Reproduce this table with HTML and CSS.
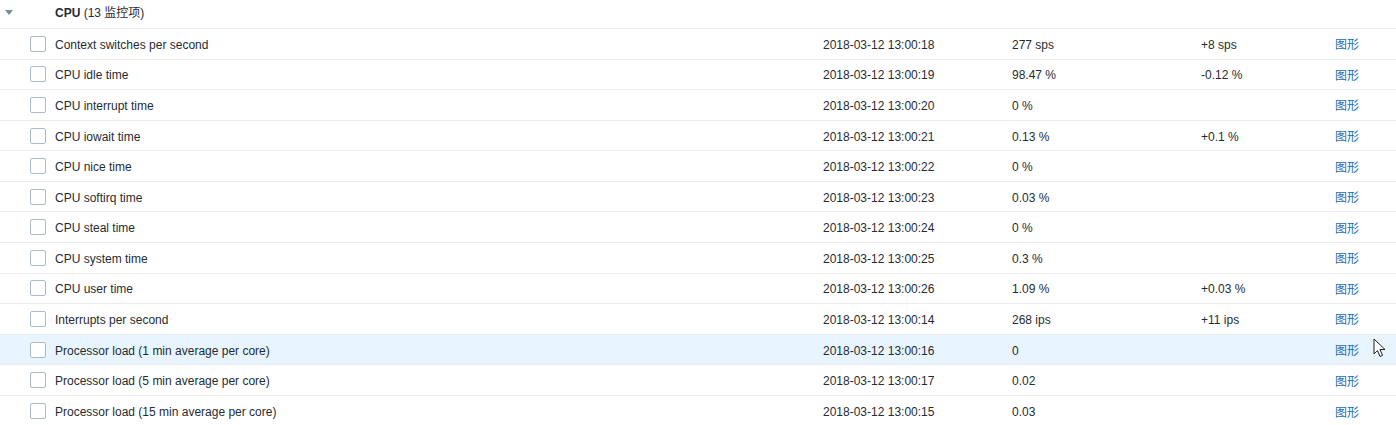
FILE: index.html
```html
<!DOCTYPE html>
<html>
<head>
<meta charset="utf-8">
<link rel="stylesheet" href="styles.css">
</head>
<body>
<div class="table">
  <div class="row head">
    <div class="toggle"><span class="arrow"></span></div>
    <div class="cell name"><b>CPU</b> (13 监控项)</div>
  </div>
  <div class="row"><div class="toggle"></div><div class="chk"><span class="box"></span></div><div class="cell name">Context switches per second</div><div class="cell date">2018-03-12 13:00:18</div><div class="cell val">277 sps</div><div class="cell chg">+8 sps</div><div class="cell lnk"><a href="#">图形</a></div></div>
  <div class="row"><div class="toggle"></div><div class="chk"><span class="box"></span></div><div class="cell name">CPU idle time</div><div class="cell date">2018-03-12 13:00:19</div><div class="cell val">98.47 %</div><div class="cell chg">-0.12 %</div><div class="cell lnk"><a href="#">图形</a></div></div>
  <div class="row"><div class="toggle"></div><div class="chk"><span class="box"></span></div><div class="cell name">CPU interrupt time</div><div class="cell date">2018-03-12 13:00:20</div><div class="cell val">0 %</div><div class="cell chg"></div><div class="cell lnk"><a href="#">图形</a></div></div>
  <div class="row"><div class="toggle"></div><div class="chk"><span class="box"></span></div><div class="cell name">CPU iowait time</div><div class="cell date">2018-03-12 13:00:21</div><div class="cell val">0.13 %</div><div class="cell chg">+0.1 %</div><div class="cell lnk"><a href="#">图形</a></div></div>
  <div class="row"><div class="toggle"></div><div class="chk"><span class="box"></span></div><div class="cell name">CPU nice time</div><div class="cell date">2018-03-12 13:00:22</div><div class="cell val">0 %</div><div class="cell chg"></div><div class="cell lnk"><a href="#">图形</a></div></div>
  <div class="row"><div class="toggle"></div><div class="chk"><span class="box"></span></div><div class="cell name">CPU softirq time</div><div class="cell date">2018-03-12 13:00:23</div><div class="cell val">0.03 %</div><div class="cell chg"></div><div class="cell lnk"><a href="#">图形</a></div></div>
  <div class="row"><div class="toggle"></div><div class="chk"><span class="box"></span></div><div class="cell name">CPU steal time</div><div class="cell date">2018-03-12 13:00:24</div><div class="cell val">0 %</div><div class="cell chg"></div><div class="cell lnk"><a href="#">图形</a></div></div>
  <div class="row"><div class="toggle"></div><div class="chk"><span class="box"></span></div><div class="cell name">CPU system time</div><div class="cell date">2018-03-12 13:00:25</div><div class="cell val">0.3 %</div><div class="cell chg"></div><div class="cell lnk"><a href="#">图形</a></div></div>
  <div class="row"><div class="toggle"></div><div class="chk"><span class="box"></span></div><div class="cell name">CPU user time</div><div class="cell date">2018-03-12 13:00:26</div><div class="cell val">1.09 %</div><div class="cell chg">+0.03 %</div><div class="cell lnk"><a href="#">图形</a></div></div>
  <div class="row"><div class="toggle"></div><div class="chk"><span class="box"></span></div><div class="cell name">Interrupts per second</div><div class="cell date">2018-03-12 13:00:14</div><div class="cell val">268 ips</div><div class="cell chg">+11 ips</div><div class="cell lnk"><a href="#">图形</a></div></div>
  <div class="row hover"><div class="toggle"></div><div class="chk"><span class="box"></span></div><div class="cell name">Processor load (1 min average per core)</div><div class="cell date">2018-03-12 13:00:16</div><div class="cell val">0</div><div class="cell chg"></div><div class="cell lnk"><a href="#">图形</a><svg class="cursor" width="14" height="21" viewBox="0 0 14 21"><path d="M1 1 L1 16 L4.5 12.5 L7 18.5 L9.5 17.5 L7 11.5 L12 11.5 Z" fill="#fff" stroke="#222" stroke-width="1" stroke-linejoin="round"/></svg></div></div>
  <div class="row"><div class="toggle"></div><div class="chk"><span class="box"></span></div><div class="cell name">Processor load (5 min average per core)</div><div class="cell date">2018-03-12 13:00:17</div><div class="cell val">0.02</div><div class="cell chg"></div><div class="cell lnk"><a href="#">图形</a></div></div>
  <div class="row last"><div class="toggle"></div><div class="chk"><span class="box"></span></div><div class="cell name">Processor load (15 min average per core)</div><div class="cell date">2018-03-12 13:00:15</div><div class="cell val">0.03</div><div class="cell chg"></div><div class="cell lnk"><a href="#">图形</a></div></div>
</div>
</body>
</html>
```

FILE: styles.css
```css
html, body {
  margin: 0;
  padding: 0;
  background: #ffffff;
}
body {
  font-family: "Liberation Sans", Arial, "Noto Sans CJK SC", sans-serif;
  font-size: 12px;
  color: #1f2c33;
}
.table {
  width: 1396px;
}
.row {
  display: grid;
  grid-template-columns: 30px 25px 768px 189px 189px 134px 1fr;
  align-items: center;
  height: 30.58px;
  box-sizing: border-box;
  border-bottom: 1px solid #ebeef0;
}
.row.head {
  grid-template-columns: 55px 1fr;
  height: 29px;
}
.row.hover {
  background: #e8f5ff;
}
.row.last {
  border-bottom: none;
}
.toggle {
  height: 100%;
  position: relative;
}
.arrow {
  position: absolute;
  left: 5px;
  top: 10px;
  width: 0;
  height: 0;
  border-left: 4px solid transparent;
  border-right: 4px solid transparent;
  border-top: 5px solid #768d99;
}
.chk {
  display: flex;
  align-items: center;
}
.box {
  display: block;
  width: 16px;
  height: 16px;
  box-sizing: border-box;
  border: 1px solid #acbbc2;
  border-radius: 2px;
  background: #fff;
}
.cell {
  white-space: nowrap;
  line-height: 14px;
  padding-top: 2px;
}
.head .cell {
  padding-top: 0;
  padding-bottom: 2px;
}
.head .name b {
  font-weight: bold;
}
.lnk {
  position: relative;
}
.lnk a {
  color: #1d6cb0;
  text-decoration: none;
  font-family: "Noto Sans CJK SC", sans-serif;
  font-size: 12px;
}
.cursor {
  position: absolute;
  left: 38px;
  top: -3px;
}
```
